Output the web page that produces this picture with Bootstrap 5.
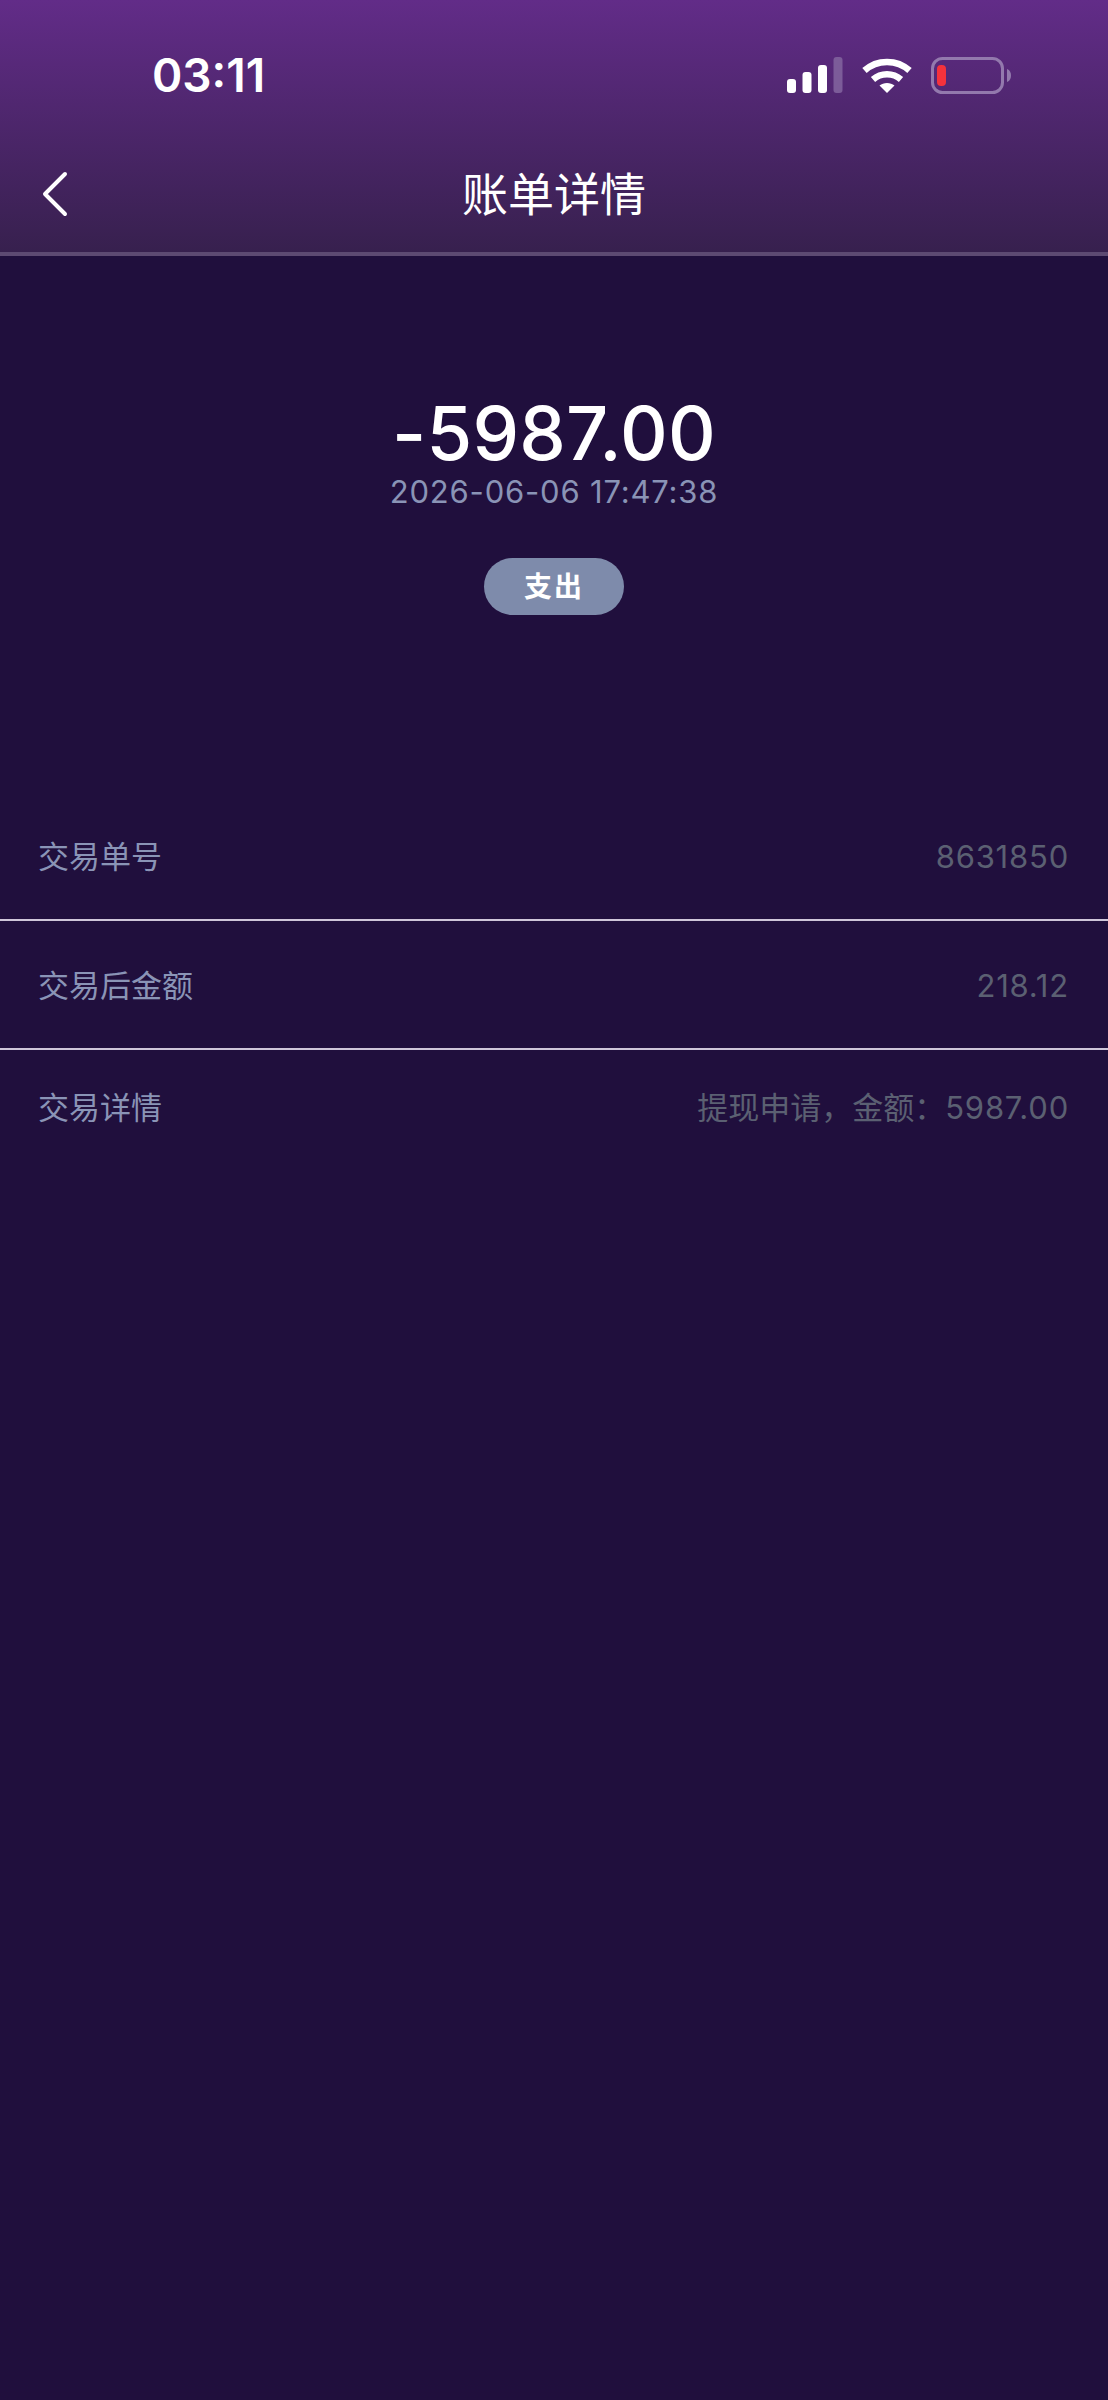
<!doctype html>
<html lang="zh-CN">
<head>
<meta charset="utf-8">
<title>账单详情</title>
<link href="https://cdn.jsdelivr.net/npm/bootstrap@5.3.0/dist/css/bootstrap.min.css" rel="stylesheet">
<style>
html,body{height:100%}
body{background:#200f3d;font-family:Inter,"Noto Sans CJK SC",sans-serif;color:#fff;min-height:2400px}
.head-wrap{height:256px;background:linear-gradient(180deg,#622c88 0%,#37204e 100%);border-bottom:4px solid #5d4a72}
.status-row{height:148px;padding:0 95px 0 152px}
.clock{font-size:46px;font-weight:600;line-height:1;margin-top:2px}
.status-icons{gap:19px;margin-top:2px}
.title-row{height:104px;margin-top:-6px}
.back-btn{left:40px;top:50%;transform:translateY(-50%);display:block;line-height:0}
.page-name{font-size:46px;line-height:1;font-weight:400}
.hero{padding-top:140px}
.sum{font-size:74px;line-height:1;font-weight:500;letter-spacing:.2px}
.stamp{font-size:31px;line-height:1;color:#8a94b6;margin-top:6px;letter-spacing:.8px}
.kind-pill{width:140px;height:57px;border-radius:29px;background:#7e8bab;font-size:28px;font-weight:600;letter-spacing:2px;margin-top:51px}
.rows{margin-top:177px}
.item-row{padding:3px 39px 0 38px;height:129px;border-bottom:2px solid #cfc6da;font-size:31px}
.item-row.tail{border-bottom:0;height:117px;padding-top:0}
.lab{color:#8a94b6}
.val{color:#5b6072}
.digits{letter-spacing:.8px}
</style>
</head>
<body>
<header class="head-wrap">
  <div class="status-row d-flex justify-content-between align-items-center">
    <span class="clock">03:11</span>
    <div class="status-icons d-flex align-items-center">
      <svg width="56" height="36" viewBox="0 0 56 36"><rect x="0" y="22" width="9" height="14" rx="3" fill="#fff"/><rect x="15.500" y="15" width="9" height="21" rx="3" fill="#fff"/><rect x="31" y="8" width="9" height="28" rx="3" fill="#fff"/><rect x="46.500" y="0" width="9" height="36" rx="3" fill="#7c5c99"/></svg>
      <svg width="50" height="36" viewBox="0 0 50 36"><g fill="none" stroke="#fff" stroke-width="6.500"><path d="M2.500 13.500C15 2 35 2 47.500 13.500"/><path d="M11 22.500C19 15.500 31 15.500 39 22.500"/></g><path d="M17.500 28.500C21.500 25 28.500 25 32.500 28.500L25 36Z" fill="#fff"/></svg>
      <svg width="82" height="37" viewBox="0 0 82 37"><rect x="1.500" y="1.500" width="70" height="34" rx="10" fill="none" stroke="#9379ad" stroke-width="3"/><rect x="6" y="8" width="9" height="21" rx="4" fill="#f5323c"/><path d="M76 12C79 13 80 16 80 18.500C80 21 79 24 76 25Z" fill="#9379ad"/></svg>
    </div>
  </div>
  <div class="title-row position-relative d-flex justify-content-center align-items-center">
    <span class="back-btn position-absolute"><svg width="30" height="46" viewBox="0 0 30 46"><path d="M25 3L5 23L25 43" fill="none" stroke="#fff" stroke-width="4" stroke-linecap="round" stroke-linejoin="round"/></svg></span>
    <span class="page-name">账单详情</span>
  </div>
</header>
<main>
  <section class="hero d-flex flex-column align-items-center">
    <div class="sum">-5987.00</div>
    <div class="stamp">2026-06-06 17:47:38</div>
    <div class="kind-pill d-flex justify-content-center align-items-center">支出</div>
  </section>
  <section class="rows">
    <div class="item-row d-flex justify-content-between align-items-center"><span class="lab">交易单号</span><span class="val digits">8631850</span></div>
    <div class="item-row d-flex justify-content-between align-items-center"><span class="lab">交易后金额</span><span class="val digits">218.12</span></div>
    <div class="item-row tail d-flex justify-content-between align-items-center"><span class="lab">交易详情</span><span class="val">提现申请，金额：<span class="digits">5987.00</span></span></div>
  </section>
</main>
<script src="https://cdn.jsdelivr.net/npm/bootstrap@5.3.0/dist/js/bootstrap.bundle.min.js"></script>
</body>
</html>
